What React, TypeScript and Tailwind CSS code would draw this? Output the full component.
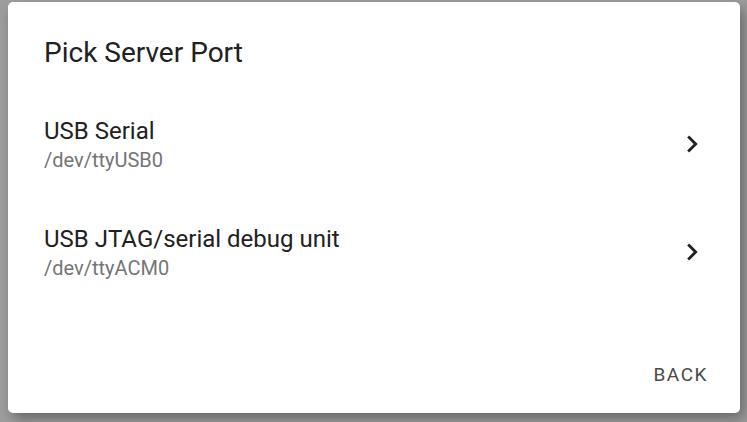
import React from "react";

interface Port {
  name: string;
  path: string;
}

const ports: Port[] = [
  { name: "USB Serial", path: "/dev/ttyUSB0" },
  { name: "USB JTAG/serial debug unit", path: "/dev/ttyACM0" },
];

function ChevronRight() {
  return (
    <svg width="34" height="34" viewBox="0 0 24 24" className="-mt-[3px] text-[#212121]">
      <path fill="currentColor" d="M10 6 8.59 7.41 13.17 12l-4.58 4.59L10 18l6-6z" />
    </svg>
  );
}

export default function App() {
  return (
    <div
      className="h-[422px] w-[747px] overflow-hidden bg-[#9e9e9e] pl-[8px] pt-[2px]"
      style={{ fontFamily: "Roboto, 'Noto Sans', sans-serif" }}
    >
      <div className="flex h-[411px] w-[732px] flex-col rounded-[5px] bg-white shadow-[4px_6px_14px_rgba(0,0,0,0.35)]">
        {/* Titel */}
        <h2 className="pl-[36px] pt-[34px] text-[28px] leading-[34px] font-normal text-[#212121]">
          Pick Server Port
        </h2>

        {/* Liste der Ports */}
        <ul className="mt-[21px]">
          {ports.map((p) => (
            <li
              key={p.path}
              className="flex h-[108px] cursor-pointer items-center pl-[36px] pr-[31px] hover:bg-black/5"
            >
              <div className="min-w-0 flex-1">
                <p className="text-[24px] leading-[28px] text-[#212121]">{p.name}</p>
                <p className="mt-[2px] text-[20px] leading-[26px] text-[#757575]">{p.path}</p>
              </div>
              <ChevronRight />
            </li>
          ))}
        </ul>

        <div className="flex-1" />

        <div className="flex justify-end pb-[26px] pr-[32px]">
          <button className="text-[19px] leading-[24px] tracking-[0.08em] text-[#4a4a4a] uppercase">
            Back
          </button>
        </div>
      </div>
    </div>
  );
}
